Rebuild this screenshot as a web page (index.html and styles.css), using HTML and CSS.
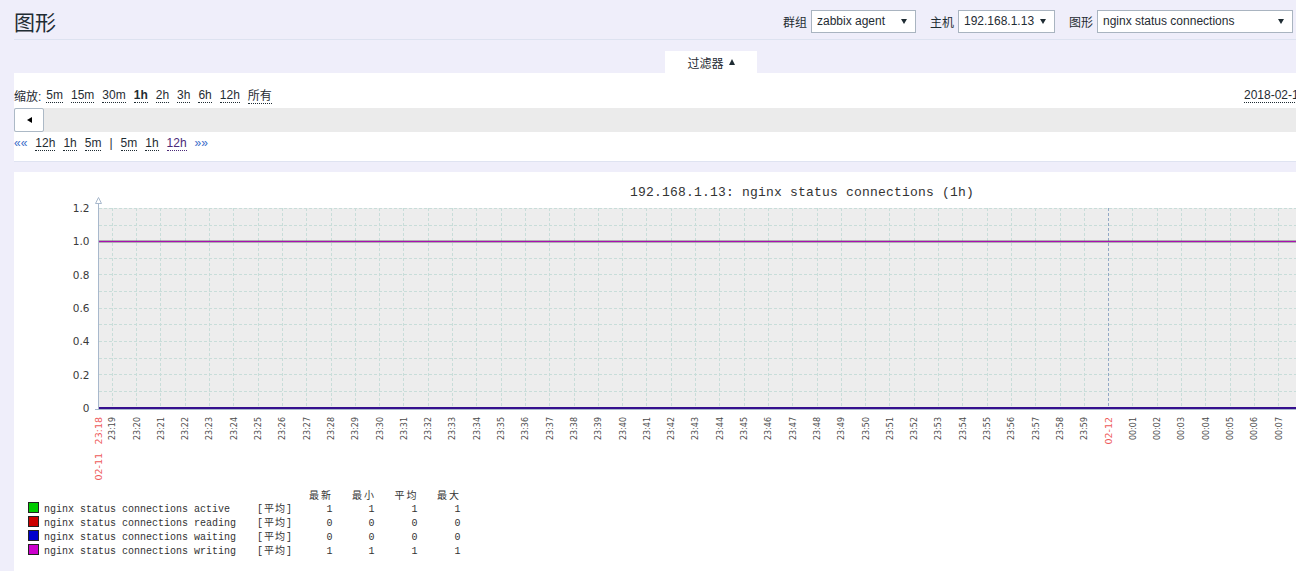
FILE: index.html
```html
<!DOCTYPE html>
<html lang="zh-CN">
<head>
<meta charset="utf-8">
<title>图形</title>
<link rel="stylesheet" href="styles.css">
</head>
<body>
<div class="page">
  <header class="header">
    <h1 class="title">图形</h1>
    <form class="controls">
      <label class="ctl"><span class="ctl-label">群组</span><span class="select w-group">zabbix agent</span></label>
      <label class="ctl"><span class="ctl-label">主机</span><span class="select w-host">192.168.1.13</span></label>
      <label class="ctl"><span class="ctl-label">图形</span><span class="select w-graph">nginx status connections</span></label>
    </form>
  </header>

  <div class="filter">
    <div class="filter-tabs"><span class="filter-tab">过滤器<span class="tri-up"></span></span></div>
    <div class="filter-panel">
      <div class="zoom-row">
        <div class="zoom-links">
          <span class="zoom-label">缩放:</span>
          <a class="lnk">5m</a>
          <a class="lnk">15m</a>
          <a class="lnk">30m</a>
          <a class="lnk bold">1h</a>
          <a class="lnk">2h</a>
          <a class="lnk">3h</a>
          <a class="lnk">6h</a>
          <a class="lnk">12h</a>
          <a class="lnk">所有</a>
        </div>
        <a class="lnk">2018-02-11 23:18:26 – 2018-02-12 00:18:26</a>
      </div>
      <div class="scroll-bar"><button class="scroll-btn" type="button"><span class="tri-left"></span></button></div>
      <div class="nav-row">
        <span class="arrows">««</span>
        <a class="lnk">12h</a>
        <a class="lnk">1h</a>
        <a class="lnk">5m</a>
        <span class="sep">|</span>
        <a class="lnk">5m</a>
        <a class="lnk">1h</a>
        <a class="lnk visited">12h</a>
        <span class="arrows">»»</span>
      </div>
    </div>
  </div>

  <div class="graph-panel">
    <svg class="graph" width="1394" height="399" viewBox="14 172 1394 399" xmlns="http://www.w3.org/2000/svg">
      <text class="g-title" x="630" y="196">192.168.1.13: nginx status connections (1h)</text>
      <rect class="g-plot" x="99" y="208" width="1310" height="200"/>
      <path class="g-grid" d="M99 208.5H1408M99 225.5H1408M99 241.5H1408M99 258.5H1408M99 274.5H1408M99 291.5H1408M99 308.5H1408M99 324.5H1408M99 341.5H1408M99 358.5H1408M99 374.5H1408M99 391.5H1408"/>
      <path class="g-grid" d="M112.5 208V408M136.5 208V408M160.5 208V408M185.5 208V408M209.5 208V408M233.5 208V408M258.5 208V408M282.5 208V408M306.5 208V408M331.5 208V408M355.5 208V408M379.5 208V408M403.5 208V408M428.5 208V408M452.5 208V408M476.5 208V408M501.5 208V408M525.5 208V408M549.5 208V408M574.5 208V408M598.5 208V408M622.5 208V408M646.5 208V408M671.5 208V408M695.5 208V408M719.5 208V408M744.5 208V408M768.5 208V408M792.5 208V408M817.5 208V408M841.5 208V408M865.5 208V408M889.5 208V408M914.5 208V408M938.5 208V408M962.5 208V408M987.5 208V408M1011.5 208V408M1035.5 208V408M1060.5 208V408M1084.5 208V408M1132.5 208V408M1157.5 208V408M1181.5 208V408M1205.5 208V408M1230.5 208V408M1254.5 208V408M1278.5 208V408M1303.5 208V408"/>
      <path class="g-grid-day" d="M1108.5 208V408"/>
      <line class="g-line-green" x1="99" y1="241.5" x2="1408" y2="241.5"/>
      <line class="g-line-mag" x1="99" y1="241.5" x2="1408" y2="241.5"/>
      <line class="g-line-red" x1="99" y1="408" x2="1408" y2="408"/>
      <line class="g-line-blue" x1="99" y1="408" x2="1408" y2="408"/>
      <path class="g-axis" d="M98.5 203V410M95 409.5H1408"/>
      <polygon class="g-arrow" points="95.5,203.5 101.5,203.5 98.5,197.5"/>

      <g class="g-yl">
        <text x="89.5" y="212">1.2</text>
        <text x="89.5" y="245.3">1.0</text>
        <text x="89.5" y="278.7">0.8</text>
        <text x="89.5" y="312">0.6</text>
        <text x="89.5" y="345.3">0.4</text>
        <text x="89.5" y="378.7">0.2</text>
        <text x="89.5" y="412">0</text>
      </g>

      <g class="g-xl-red">
        <text transform="translate(101.5 417) rotate(-90)">23:18</text>
        <text transform="translate(101.5 453) rotate(-90)">02-11</text>
        <text transform="translate(1112.1 417) rotate(-90)">02-12</text>
      </g>
      <g class="g-xl">
        <text transform="translate(115.2 417) rotate(-90)">23:19</text>
        <text transform="translate(139.5 417) rotate(-90)">23:20</text>
        <text transform="translate(163.8 417) rotate(-90)">23:21</text>
        <text transform="translate(188.1 417) rotate(-90)">23:22</text>
        <text transform="translate(212.4 417) rotate(-90)">23:23</text>
        <text transform="translate(236.7 417) rotate(-90)">23:24</text>
        <text transform="translate(261 417) rotate(-90)">23:25</text>
        <text transform="translate(285.3 417) rotate(-90)">23:26</text>
        <text transform="translate(309.6 417) rotate(-90)">23:27</text>
        <text transform="translate(333.9 417) rotate(-90)">23:28</text>
        <text transform="translate(358.2 417) rotate(-90)">23:29</text>
        <text transform="translate(382.5 417) rotate(-90)">23:30</text>
        <text transform="translate(406.8 417) rotate(-90)">23:31</text>
        <text transform="translate(431.1 417) rotate(-90)">23:32</text>
        <text transform="translate(455.4 417) rotate(-90)">23:33</text>
        <text transform="translate(479.7 417) rotate(-90)">23:34</text>
        <text transform="translate(504 417) rotate(-90)">23:35</text>
        <text transform="translate(528.3 417) rotate(-90)">23:36</text>
        <text transform="translate(552.6 417) rotate(-90)">23:37</text>
        <text transform="translate(576.9 417) rotate(-90)">23:38</text>
        <text transform="translate(601.2 417) rotate(-90)">23:39</text>
        <text transform="translate(625.5 417) rotate(-90)">23:40</text>
        <text transform="translate(649.8 417) rotate(-90)">23:41</text>
        <text transform="translate(674.1 417) rotate(-90)">23:42</text>
        <text transform="translate(698.4 417) rotate(-90)">23:43</text>
        <text transform="translate(722.7 417) rotate(-90)">23:44</text>
        <text transform="translate(747 417) rotate(-90)">23:45</text>
        <text transform="translate(771.3 417) rotate(-90)">23:46</text>
        <text transform="translate(795.6 417) rotate(-90)">23:47</text>
        <text transform="translate(819.9 417) rotate(-90)">23:48</text>
        <text transform="translate(844.2 417) rotate(-90)">23:49</text>
        <text transform="translate(868.5 417) rotate(-90)">23:50</text>
        <text transform="translate(892.8 417) rotate(-90)">23:51</text>
        <text transform="translate(917.1 417) rotate(-90)">23:52</text>
        <text transform="translate(941.4 417) rotate(-90)">23:53</text>
        <text transform="translate(965.7 417) rotate(-90)">23:54</text>
        <text transform="translate(990 417) rotate(-90)">23:55</text>
        <text transform="translate(1014.3 417) rotate(-90)">23:56</text>
        <text transform="translate(1038.6 417) rotate(-90)">23:57</text>
        <text transform="translate(1062.9 417) rotate(-90)">23:58</text>
        <text transform="translate(1087.2 417) rotate(-90)">23:59</text>
        <text transform="translate(1135.8 417) rotate(-90)">00:01</text>
        <text transform="translate(1160.1 417) rotate(-90)">00:02</text>
        <text transform="translate(1184.4 417) rotate(-90)">00:03</text>
        <text transform="translate(1208.7 417) rotate(-90)">00:04</text>
        <text transform="translate(1233 417) rotate(-90)">00:05</text>
        <text transform="translate(1257.3 417) rotate(-90)">00:06</text>
        <text transform="translate(1281.6 417) rotate(-90)">00:07</text>
      </g>

      <g class="g-leg-h">
        <text x="309" y="499">最新</text>
        <text x="352" y="499">最小</text>
        <text x="394.5" y="499">平均</text>
        <text x="437" y="499">最大</text>
      </g>
      <g class="g-swatch">
        <rect class="sw-green" x="28.5" y="502.5" width="10" height="10"/>
        <rect class="sw-red" x="28.5" y="516.5" width="10" height="10"/>
        <rect class="sw-blue" x="28.5" y="530.5" width="10" height="10"/>
        <rect class="sw-mag" x="28.5" y="544.5" width="10" height="10"/>
      </g>
      <g class="g-leg">
        <text x="44" y="511.5">nginx status connections active</text>
        <text x="44" y="525.5">nginx status connections reading</text>
        <text x="44" y="539.5">nginx status connections waiting</text>
        <text x="44" y="553.5">nginx status connections writing</text>
        <text class="g-fn" x="257" y="511.5">[平均]</text>
        <text class="g-fn" x="257" y="525.5">[平均]</text>
        <text class="g-fn" x="257" y="539.5">[平均]</text>
        <text class="g-fn" x="257" y="553.5">[平均]</text>
      </g>
      <g class="g-leg g-val">
        <text x="332.5" y="511.5">1</text><text x="374.5" y="511.5">1</text><text x="417.5" y="511.5">1</text><text x="460.5" y="511.5">1</text>
        <text x="332.5" y="525.5">0</text><text x="374.5" y="525.5">0</text><text x="417.5" y="525.5">0</text><text x="460.5" y="525.5">0</text>
        <text x="332.5" y="539.5">0</text><text x="374.5" y="539.5">0</text><text x="417.5" y="539.5">0</text><text x="460.5" y="539.5">0</text>
        <text x="332.5" y="553.5">1</text><text x="374.5" y="553.5">1</text><text x="417.5" y="553.5">1</text><text x="460.5" y="553.5">1</text>
      </g>
    </svg>
  </div>
</div>
</body>
</html>
```

FILE: styles.css
```css
html, body {
  margin: 0;
  padding: 0;
  overflow: hidden;
}

body {
  width: 1296px;
  height: 571px;
  background: #efeefa;
  color: #1f2c33;
  font: 12px 'Liberation Sans', Arial, 'Noto Sans CJK SC', sans-serif;
}

.page {
  padding-left: 14px;
}

/* header */
.header {
  display: flex;
  align-items: center;
  justify-content: space-between;
  height: 40px;
  box-sizing: border-box;
  padding: 3px 3px 0 0;
  border-bottom: 1px solid #dde2f0;
}

.title {
  margin: 0;
  font-family: 'Noto Sans CJK SC', sans-serif;
  font-weight: normal;
  font-size: 21px;
  line-height: 1;
  color: #1f2c33;
}

.controls {
  display: flex;
  gap: 14px;
  margin: 0;
}

.ctl {
  display: flex;
  align-items: center;
  gap: 4px;
}

.select {
  position: relative;
  display: block;
  height: 23px;
  box-sizing: border-box;
  border: 1px solid #a9b4c0;
  background: #fff;
  line-height: 21px;
  padding-left: 5px;
  white-space: nowrap;
}

.select::after {
  content: '';
  position: absolute;
  right: 8px;
  top: 8px;
  border-left: 3px solid transparent;
  border-right: 3px solid transparent;
  border-top: 5px solid #1f2c33;
}

.w-group { width: 105px; }
.w-host { width: 97px; }
.w-graph { width: 196px; }

/* filter */
.filter {
  width: 1394px;
}

.filter-tabs {
  display: flex;
  justify-content: center;
  margin-top: 11px;
}

.filter-tab {
  display: flex;
  align-items: center;
  gap: 5px;
  height: 22px;
  padding: 0 22px;
  background: #fff;
}

.tri-up {
  width: 0;
  height: 0;
  border-left: 3.5px solid transparent;
  border-right: 3.5px solid transparent;
  border-bottom: 6px solid #1f2c33;
}

.filter-panel {
  background: #fff;
  border-bottom: 1px solid #dfe3f1;
  padding: 13px 0 9px;
}

.zoom-row,
.nav-row {
  display: flex;
  align-items: center;
  height: 18px;
  white-space: nowrap;
}

.zoom-links {
  flex: 0 0 1230px;
  display: flex;
  align-items: center;
  gap: 8px;
}

.zoom-label {
  margin-right: -3px;
}

.lnk {
  color: #1f2c33;
  text-decoration: none;
  border-bottom: 1px dotted #1f2c33;
  line-height: normal;
}

.lnk.bold {
  font-weight: bold;
}

.lnk.visited {
  color: #4b2a78;
  border-bottom-color: #4b2a78;
}

.nav-row {
  gap: 8px;
  margin-top: 2px;
}

.arrows {
  color: #3b6cc9;
}

.scroll-bar {
  display: flex;
  height: 24px;
  margin-top: 4px;
  background: #ebebeb;
}

.scroll-btn {
  display: flex;
  align-items: center;
  justify-content: center;
  width: 30px;
  height: 24px;
  padding: 0;
  background: #fff;
  border: 1px solid #acb9c6;
  border-radius: 2px;
}

.tri-left {
  width: 0;
  height: 0;
  border-top: 3.5px solid transparent;
  border-bottom: 3.5px solid transparent;
  border-right: 5px solid #000;
}

/* graph */
.graph-panel {
  width: 1394px;
  height: 399px;
  margin-top: 10px;
  background: #fff;
}

.graph {
  display: block;
}

.g-title {
  font: 13px 'Liberation Mono', 'Noto Sans CJK SC', monospace;
  letter-spacing: 0.2px;
  fill: #333;
}

.g-plot {
  fill: #ededed;
}

.g-grid {
  fill: none;
  stroke: #c8ddd9;
  stroke-width: 1;
  stroke-dasharray: 3 2;
}

.g-grid-day {
  fill: none;
  stroke: #93a9c6;
  stroke-width: 1;
  stroke-dasharray: 3 2;
}

.g-axis {
  fill: none;
  stroke: #a8b8cc;
  stroke-width: 1;
}

.g-arrow {
  fill: #fff;
  stroke: #a8b8cc;
  stroke-width: 1;
}

.g-line-green { stroke: #00c800; stroke-width: 1.5; }
.g-line-mag { stroke: #a810b0; stroke-width: 1.5; }
.g-line-red { stroke: #c80000; stroke-width: 1.5; }
.g-line-blue { stroke: #0000a8; stroke-width: 1.5; }

.g-yl {
  font: 10.5px 'DejaVu Sans', sans-serif;
  fill: #3a3a3a;
  text-anchor: end;
}

.g-xl {
  font: 8px 'DejaVu Sans', sans-serif;
  fill: #4a4a4a;
  text-anchor: end;
}

.g-xl-red {
  font: 9.5px 'DejaVu Sans', sans-serif;
  fill: #ee5a5a;
  text-anchor: end;
}

.g-leg-h {
  font: 10px 'Noto Sans CJK SC', sans-serif;
  fill: #333;
  letter-spacing: 2px;
}

.g-leg {
  font: 10px 'Liberation Mono', 'Noto Sans CJK SC', monospace;
  fill: #333;
}

.g-fn {
  letter-spacing: 1px;
}

.g-val {
  text-anchor: end;
}

.g-swatch rect {
  stroke: #222;
  stroke-width: 1;
}

.sw-green { fill: #00cc00; }
.sw-red { fill: #cc0000; }
.sw-blue { fill: #0000cc; }
.sw-mag { fill: #cc00cc; }
```
